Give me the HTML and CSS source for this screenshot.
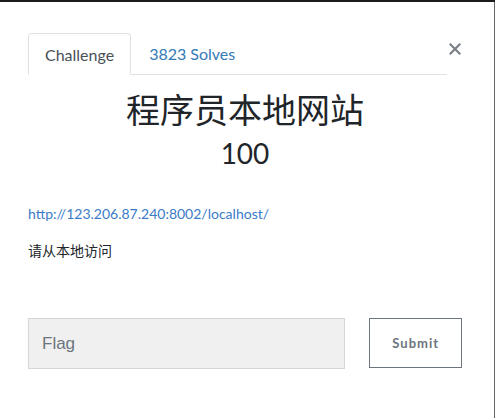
FILE: index.html
```html
<!DOCTYPE html>
<html lang="zh">
<head>
<meta charset="utf-8">
<title>Challenge</title>
<link rel="stylesheet" href="styles.css">
</head>
<body>
<div class="modal">
  <div class="modal-head">
    <ul class="tabs">
      <li class="tab active">Challenge</li>
      <li class="tab link">3823 Solves</li>
    </ul>
    <button class="close" aria-label="Close">
      <svg width="12" height="12" viewBox="0 0 12 12"><path d="M1.5 1.5 L10.5 10.5 M10.5 1.5 L1.5 10.5" stroke="#7b8087" stroke-width="2.2" stroke-linecap="square"/></svg>
    </button>
  </div>
  <h2 class="title">程序员本地网站</h2>
  <h3 class="value">100</h3>
  <p class="desc"><a href="#">http://123.206.87.240:8002/localhost/</a></p>
  <p class="desc text">请从本地访问</p>
  <form class="submit-row">
    <input class="flag" type="text" placeholder="Flag">
    <button class="submit" type="button">Submit</button>
  </form>
</div>
</body>
</html>
```
FILE: styles.css
```css
html, body {
  margin: 0;
  padding: 0;
  background: #1b1b1b;
  height: 418px;
  overflow: hidden;
}
body {
  font-family: Lato, "Noto Sans CJK SC", sans-serif;
  color: #212529;
}
.modal {
  background: #fff;
  margin: 2px 1px 0 0;
  height: 416px;
  box-sizing: border-box;
  padding: 31px 32px 0 28px;
  box-shadow: 1px 0 0 #666;
}
.modal-head {
  display: flex;
  align-items: flex-start;
}
.tabs {
  flex: 1;
  display: flex;
  list-style: none;
  margin: 0;
  padding: 0;
  border-bottom: 1px solid #dee2e6;
}
.tab {
  height: 40px;
  box-sizing: border-box;
  padding: 0 16px;
  display: flex;
  align-items: center;
  font-size: 16px;
  border: 1px solid transparent;
  border-radius: 4px 4px 0 0;
  margin-bottom: -1px;
}
.tab.active {
  color: #495057;
  border-color: #dee2e6 #dee2e6 #fff;
  height: 42px;
  background: #fff;
}
.tab.link {
  color: #337ab7;
  padding: 0 17px;
}
.close {
  border: 0;
  background: none;
  padding: 0;
  margin: 9px 0 0 1px;
  width: 14px;
  height: 14px;
  display: flex;
  align-items: center;
  justify-content: center;
}
.title {
  font-weight: 400;
  font-size: 34px;
  line-height: 1.2;
  text-align: center;
  margin: 15px 0 0;
  color: #212529;
}
.value {
  font-weight: 400;
  font-size: 28px;
  line-height: 1.2;
  text-align: center;
  margin: 6px 0 0;
  color: #212529;
}
.desc {
  font-size: 14px;
  line-height: 20px;
  margin: 34px 0 0;
}
.desc a {
  color: #3a7bc8;
  text-decoration: none;
}
.desc.text {
  margin-top: 17px;
}
.submit-row {
  display: flex;
  align-items: flex-start;
  gap: 24px;
  margin-top: 57px;
}
.flag {
  width: 319px;
  height: 51px;
  box-sizing: border-box;
  background: #f0f0f0;
  border: 1px solid #d3d6da;
  padding: 0 13px;
  font-family: "Liberation Sans", Arial, sans-serif;
  font-size: 17px;
  color: #495057;
  outline: none;
}
.flag::placeholder {
  color: #6c757d;
}
.submit {
  width: 93px;
  height: 50px;
  background: #fff;
  border: 1px solid #6c757d;
  color: #6c757d;
  font-family: Lato, sans-serif;
  font-weight: 700;
  font-size: 13px;
  letter-spacing: 1px;
  padding: 0;
}
```
